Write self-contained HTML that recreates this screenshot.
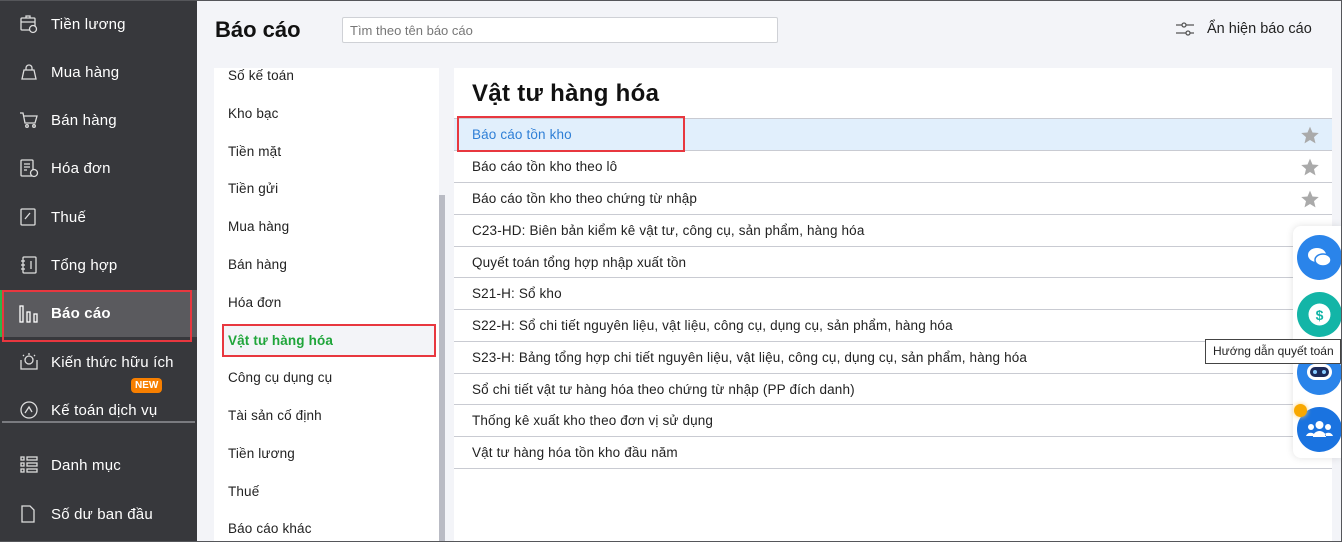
<!DOCTYPE html>
<html><head><meta charset="utf-8"><style>
*{margin:0;padding:0;box-sizing:border-box}
body{width:1342px;height:542px;overflow:hidden;background:#f3f4f8;font-family:"Liberation Sans","DejaVu Sans",sans-serif;position:relative}
.frame{position:absolute;inset:0;border:1px solid #55565a;border-left:none;pointer-events:none;z-index:50}
.side{position:absolute;left:0;top:0;width:197px;height:542px;background:#37383c}
.si{position:absolute;left:0;width:197px;height:48px;display:flex;align-items:center;color:#fff;font-size:15px;letter-spacing:.2px}
.si svg{position:absolute;left:19px;width:20px;height:20px}
.si span{position:absolute;left:51px}
.act{background:#5a5a5e;border-left:2px solid #2db34a}
.redbox{position:absolute;border:2px solid #e8373f}
.new{position:absolute;left:131px;top:378px;background:#f77f00;color:#fff;font-size:10px;font-weight:bold;padding:2px 4px;border-radius:4px}
.div{position:absolute;left:2px;top:421px;width:193px;height:2px;background:#7a7b80}
h1{position:absolute;left:215px;top:17px;font-size:22px;font-weight:bold;color:#111}
.search{position:absolute;left:342px;top:17px;width:436px;height:26px;background:#fff;border:1px solid #cfd1d6;border-radius:2px;font-size:13px;color:#777;padding:5px 7px}
.toggle{position:absolute;left:1175px;top:21px;font-size:14.5px;color:#222;display:flex;align-items:center}
.toggle span{margin-left:12px}
.left{position:absolute;left:214px;top:68px;width:225px;height:474px;background:#fff;overflow:hidden}
.li{position:absolute;left:14px;font-size:13.5px;color:#222;letter-spacing:.15px}
.sb{position:absolute;left:439px;top:195px;width:6px;height:347px;background:#b9bbc4}
.right{position:absolute;left:454px;top:68px;width:878px;height:474px;background:#fff}
.right h2{position:absolute;left:18px;top:12px;font-size:24px;font-weight:bold;color:#111;letter-spacing:.3px}
.row{position:absolute;left:0;width:878px;height:32px;border-top:1px solid #c9cbd2;font-size:13.5px;color:#222;padding:8px 0 0 18px;letter-spacing:.15px}
.row.hl{background:#e1effc;color:#2f7fd6}
.star{position:absolute;right:12px;top:6px;width:20px;height:20px}
.fab{position:absolute;left:1293px;top:226px;width:49px;height:232px;background:#fff;border-radius:8px 0 0 8px;box-shadow:0 0 8px rgba(0,0,0,.12)}
.c{position:absolute;left:1297px;width:45px;height:45px;border-radius:50%}
.tip{position:absolute;left:1205px;top:339px;width:136px;height:25px;background:#fff;border:1px solid #444;font-size:12px;color:#222;padding:4px 0 0 7px}
</style></head><body>
<div class="side">
<div class="si" style="top:0"><svg viewBox="0 0 20 20" fill="none" stroke="#ddd" stroke-width="1.3"><rect x="2" y="4" width="14" height="12" rx="1"/><path d="M7 4V2h4v2M2 8h14"/><circle cx="14" cy="15" r="3.5" fill="#37383c"/></svg><span>Tiền lương</span></div>
<div class="si" style="top:48px"><svg viewBox="0 0 20 20" fill="none" stroke="#ddd" stroke-width="1.3"><path d="M3 17L5 8h10l2 9zM7 8V6a3 3 0 016 0v2"/></svg><span>Mua hàng</span></div>
<div class="si" style="top:96px"><svg viewBox="0 0 20 20" fill="none" stroke="#ddd" stroke-width="1.3"><path d="M1 3h3l2 10h10l2-7H5"/><circle cx="8" cy="16" r="1.3"/><circle cx="15" cy="16" r="1.3"/></svg><span>Bán hàng</span></div>
<div class="si" style="top:144px"><svg viewBox="0 0 20 20" fill="none" stroke="#ddd" stroke-width="1.3"><rect x="2" y="2" width="12" height="16" rx="1"/><path d="M5 6h6M5 9h6M5 12h3"/><circle cx="15" cy="15" r="3.5" fill="#37383c"/></svg><span>Hóa đơn</span></div>
<div class="si" style="top:193px"><svg viewBox="0 0 20 20" fill="none" stroke="#ddd" stroke-width="1.3"><rect x="2" y="2" width="14" height="16" rx="1"/><path d="M6 12l5-6"/></svg><span>Thuế</span></div>
<div class="si" style="top:241px"><svg viewBox="0 0 20 20" fill="none" stroke="#ddd" stroke-width="1.3"><rect x="4" y="2" width="13" height="16" rx="1"/><path d="M2 6h4M2 10h4M2 14h4M12 6v8"/></svg><span>Tổng hợp</span></div>
<div class="si act" style="top:290px;height:47px"><svg viewBox="0 0 20 20" fill="none" stroke="#fff" stroke-width="1.3" style="left:17px"><rect x="1" y="2" width="3" height="16"/><rect x="8" y="8" width="3" height="10"/><rect x="15" y="10" width="3" height="8"/></svg><span style="left:49px;font-weight:bold">Báo cáo</span></div>
<div class="si" style="top:338px"><svg viewBox="0 0 20 20" fill="none" stroke="#ddd" stroke-width="1.3"><circle cx="10" cy="8" r="4"/><path d="M2 8v9h16V8M10 1v2M4 3l1 1M16 3l-1 1"/></svg><span>Kiến thức hữu ích</span></div>
<div class="si" style="top:386px"><svg viewBox="0 0 20 20" fill="none" stroke="#ddd" stroke-width="1.3"><circle cx="10" cy="10" r="8"/><path d="M6 13l4-6 3 5"/></svg><span>Kế toán dịch vụ</span></div>
<div class="si" style="top:441px"><svg viewBox="0 0 20 20" fill="none" stroke="#ddd" stroke-width="1.3"><rect x="2" y="2" width="3" height="3"/><rect x="8" y="2" width="10" height="3"/><rect x="2" y="8" width="3" height="3"/><rect x="8" y="8" width="10" height="3"/><rect x="2" y="14" width="3" height="3"/><rect x="8" y="14" width="10" height="3"/></svg><span>Danh mục</span></div>
<div class="si" style="top:490px"><svg viewBox="0 0 20 20" fill="none" stroke="#ddd" stroke-width="1.3"><path d="M3 2h8l4 4v12H3z"/></svg><span>Số dư ban đầu</span></div>
</div>
<div class="div"></div>
<div class="new">NEW</div>
<div class="redbox" style="left:2px;top:290px;width:190px;height:52px"></div>
<h1>Báo cáo</h1>
<div class="search">Tìm theo tên báo cáo</div>
<div class="toggle"><svg width="20" height="16" viewBox="0 0 20 16" fill="none" stroke="#555" stroke-width="1.3"><path d="M1 4h6M11 4h8M1 12h10M15 12h4"/><circle cx="9" cy="4" r="2"/><circle cx="13" cy="12" r="2"/></svg><span>Ẩn hiện báo cáo</span></div>
<div class="left">
<div class="li" style="top:0">Số kế toán</div>
<div class="li" style="top:38px">Kho bạc</div>
<div class="li" style="top:76px">Tiền mặt</div>
<div class="li" style="top:113px">Tiền gửi</div>
<div class="li" style="top:151px">Mua hàng</div>
<div class="li" style="top:189px">Bán hàng</div>
<div class="li" style="top:227px">Hóa đơn</div>
<div style="position:absolute;left:8px;top:256px;width:212px;height:32px;background:#f3f4f8"></div>
<div class="li" style="top:265px;color:#1fa53a;font-weight:bold">Vật tư hàng hóa</div>
<div class="li" style="top:302px">Công cụ dụng cụ</div>
<div class="li" style="top:340px">Tài sản cố định</div>
<div class="li" style="top:378px">Tiền lương</div>
<div class="li" style="top:416px">Thuế</div>
<div class="li" style="top:453px">Báo cáo khác</div>
</div>
<div class="sb"></div>
<div class="redbox" style="left:222px;top:324px;width:214px;height:33px"></div>
<div class="right">
<h2>Vật tư hàng hóa</h2>
<div class="row hl" style="top:50px">Báo cáo tồn kho<svg class="star" viewBox="0 0 24 24"><path fill="#aaa" d="M12 2l3 7 7.5.6-5.7 5 1.8 7.4L12 18l-6.6 4 1.8-7.4-5.7-5L9 9z"/></svg></div>
<div class="row" style="top:82px">Báo cáo tồn kho theo lô<svg class="star" viewBox="0 0 24 24"><path fill="#aaa" d="M12 2l3 7 7.5.6-5.7 5 1.8 7.4L12 18l-6.6 4 1.8-7.4-5.7-5L9 9z"/></svg></div>
<div class="row" style="top:114px">Báo cáo tồn kho theo chứng từ nhập<svg class="star" viewBox="0 0 24 24"><path fill="#aaa" d="M12 2l3 7 7.5.6-5.7 5 1.8 7.4L12 18l-6.6 4 1.8-7.4-5.7-5L9 9z"/></svg></div>
<div class="row" style="top:146px">C23-HD: Biên bản kiểm kê vật tư, công cụ, sản phẩm, hàng hóa</div>
<div class="row" style="top:178px">Quyết toán tổng hợp nhập xuất tồn</div>
<div class="row" style="top:209px">S21-H: Sổ kho</div>
<div class="row" style="top:241px">S22-H: Sổ chi tiết nguyên liệu, vật liệu, công cụ, dụng cụ, sản phẩm, hàng hóa</div>
<div class="row" style="top:273px">S23-H: Bảng tổng hợp chi tiết nguyên liệu, vật liệu, công cụ, dụng cụ, sản phẩm, hàng hóa</div>
<div class="row" style="top:305px">Sổ chi tiết vật tư hàng hóa theo chứng từ nhập (PP đích danh)</div>
<div class="row" style="top:336px">Thống kê xuất kho theo đơn vị sử dụng</div>
<div class="row" style="top:368px">Vật tư hàng hóa tồn kho đầu năm</div>
<div class="row" style="top:400px;height:1px"></div>
</div>
<div class="redbox" style="left:457px;top:116px;width:228px;height:36px"></div>
<div class="fab"></div>
<div class="c" style="top:235px;background:#2a84ea"><svg width="45" height="45" viewBox="0 0 45 45"><ellipse cx="20" cy="20" rx="9" ry="7" fill="#fff"/><ellipse cx="26" cy="25" rx="8" ry="6" fill="#fff" stroke="#2a84ea" stroke-width="1.5"/></svg></div>
<div class="c" style="top:292px;background:#13b5a7"><svg width="45" height="45" viewBox="0 0 45 45"><circle cx="22.5" cy="22.5" r="11" fill="#fff"/><text x="22.5" y="28" text-anchor="middle" font-size="14" font-weight="bold" fill="#13b5a7" font-family="Liberation Sans">$</text></svg></div>
<div class="c" style="top:350px;background:#2a84ea"><svg width="45" height="45" viewBox="0 0 45 45"><rect x="10" y="14" width="25" height="16" rx="8" fill="#fff"/><rect x="13" y="17" width="19" height="10" rx="5" fill="#1b2a5a"/><circle cx="18" cy="22" r="2" fill="#8cf"/><circle cx="27" cy="22" r="2" fill="#8cf"/></svg></div>
<div class="c" style="top:407px;background:#1a73e0"><svg width="45" height="45" viewBox="0 0 45 45" fill="#fff"><circle cx="22.5" cy="18" r="4"/><circle cx="14" cy="20" r="3"/><circle cx="31" cy="20" r="3"/><path d="M16 30a6.5 6 0 0113 0zM9 29a5 5 0 018-2v2zM36 29a5 5 0 00-8-2v2z"/></svg></div>
<div style="position:absolute;left:1294px;top:404px;width:13px;height:13px;border-radius:50%;background:#f8a800;box-shadow:0 0 5px #fc6"></div>
<div class="tip">Hướng dẫn quyết toán</div>
<div class="frame"></div>
</body></html>
